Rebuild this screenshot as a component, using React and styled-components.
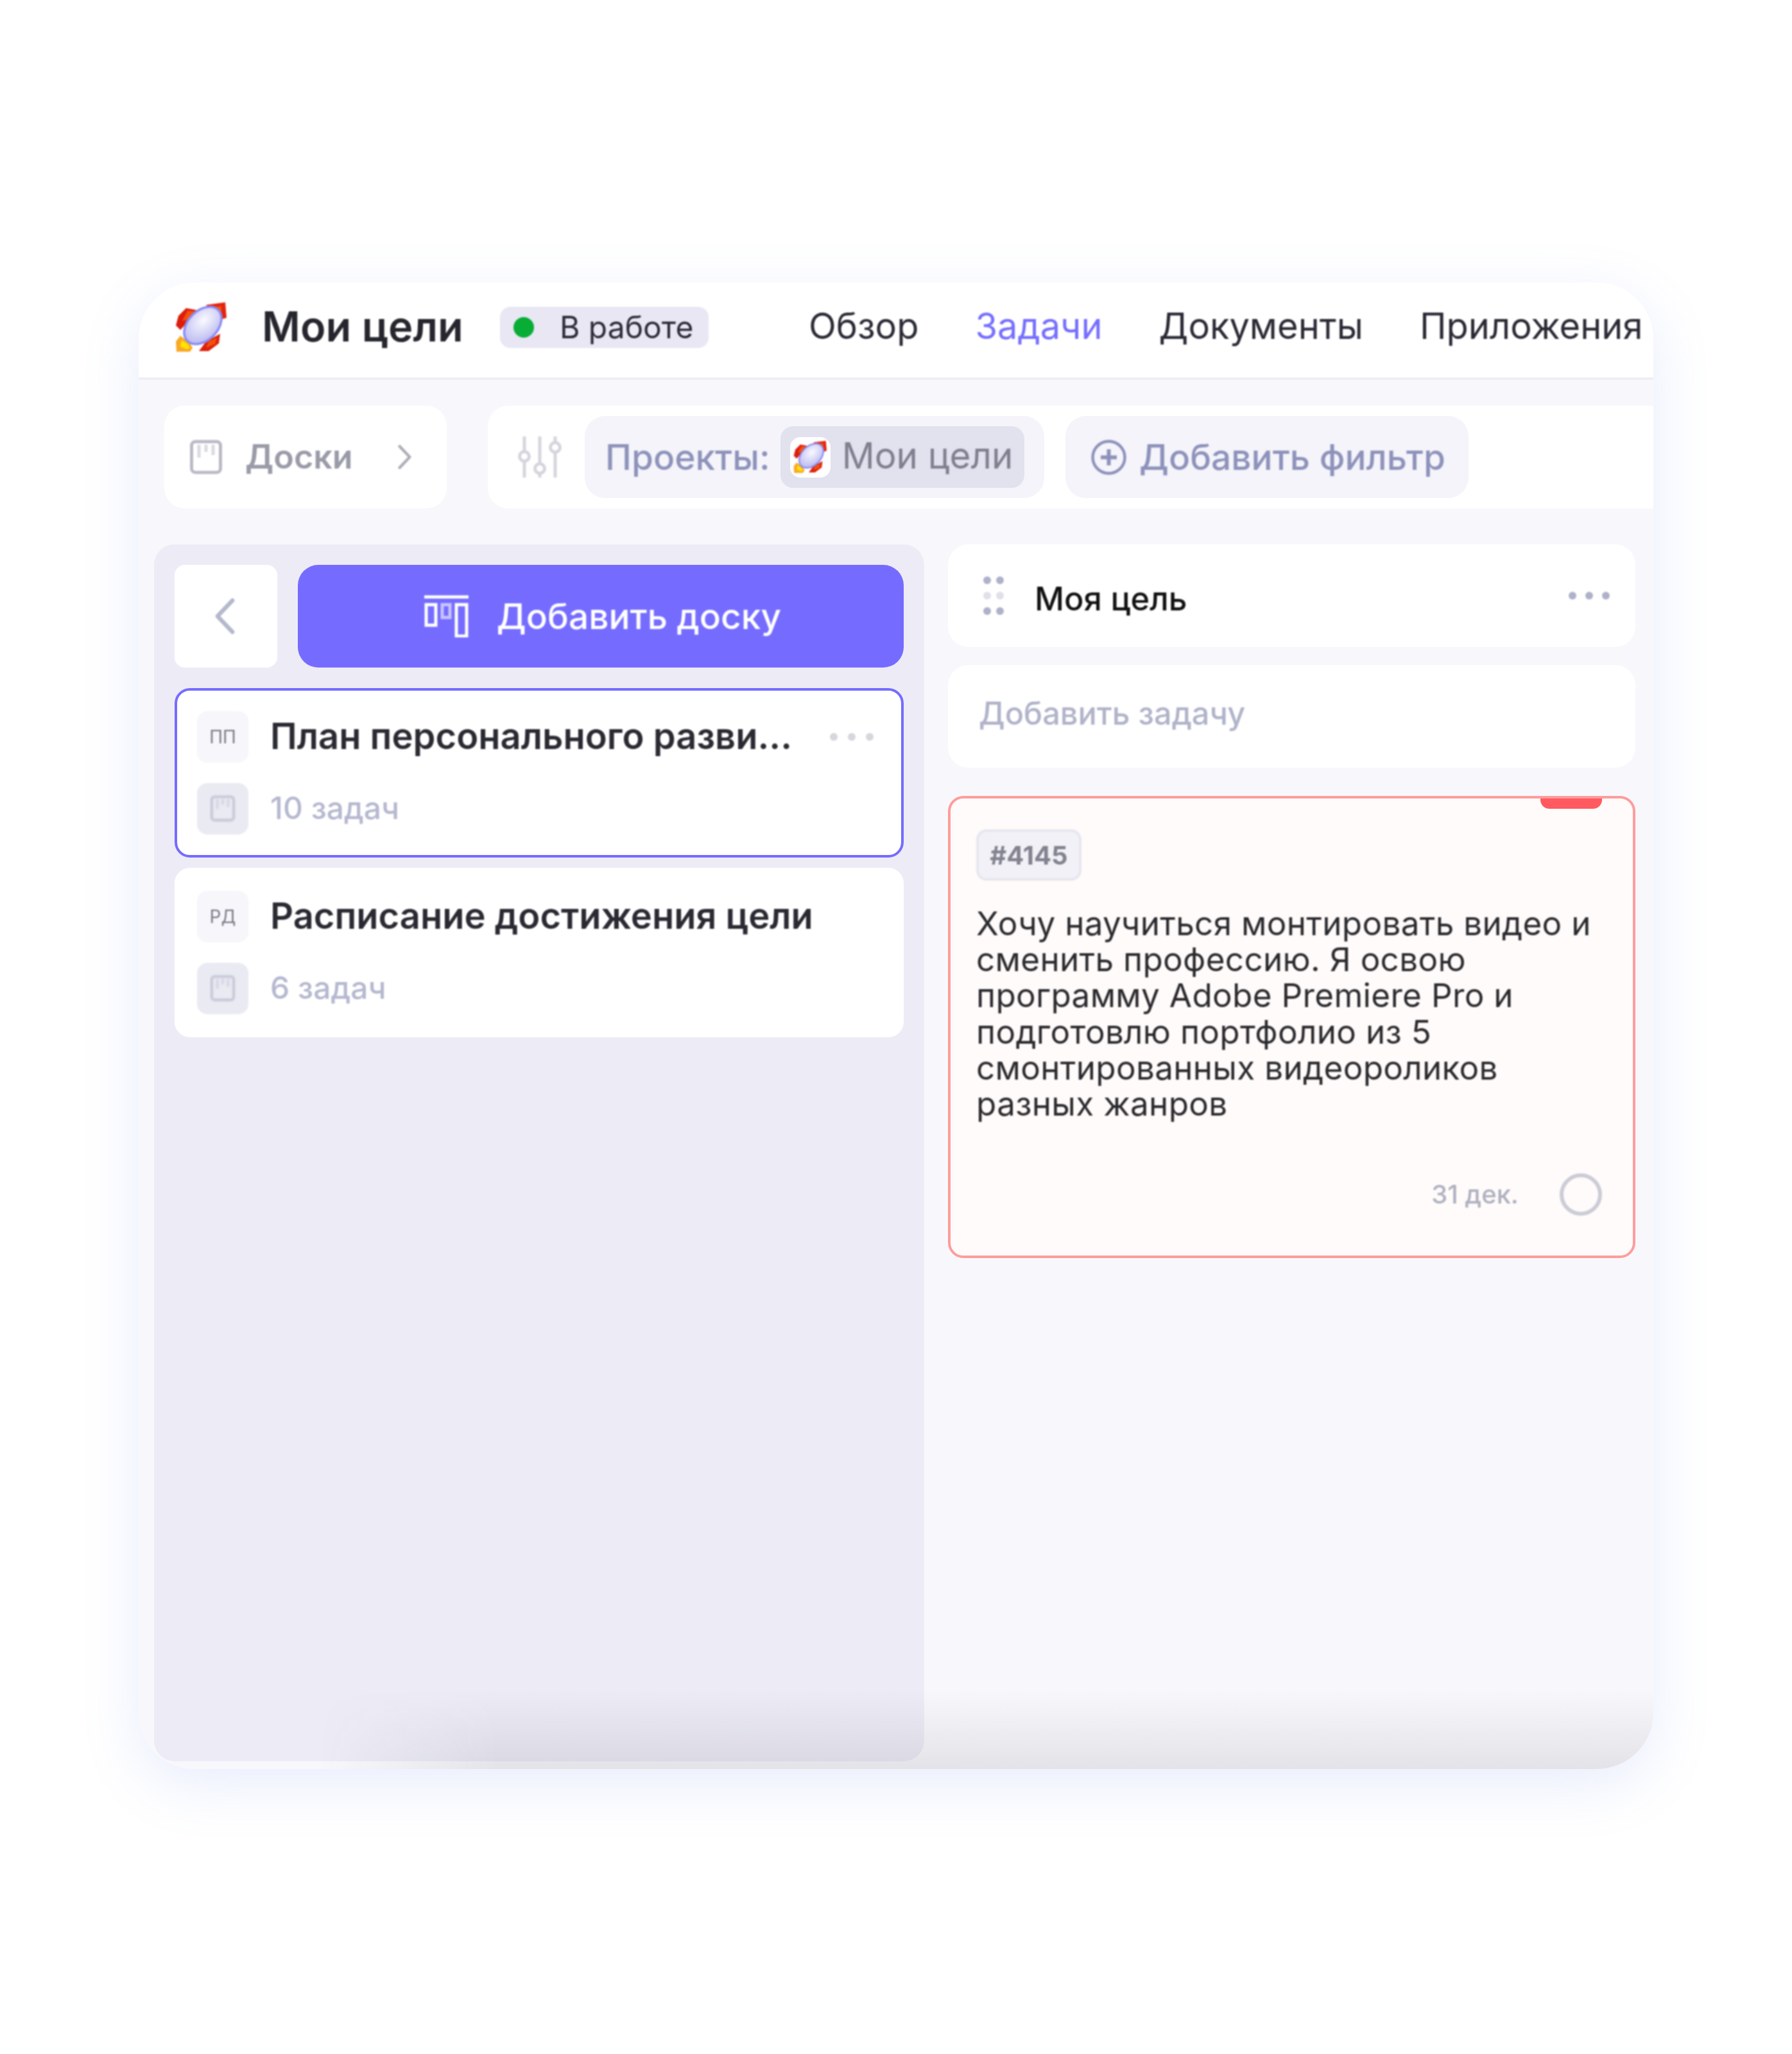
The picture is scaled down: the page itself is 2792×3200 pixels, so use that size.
import React from 'react';
import styled, { createGlobalStyle, css } from 'styled-components';

const Global = createGlobalStyle`
  html, body { margin: 0; background: #fff; }
  * { box-sizing: border-box; }
  body { font-family: Inter, "Noto Sans", sans-serif; }
`;
const soft = css`filter: blur(1.2px);`;

const Stage = styled.div`
  width: 2792px; height: 3200px; padding: 440px 216px 0 216px;
`;
const Win = styled.div`
  position: relative; width: 2360px; height: 2316px; background: #f8f8fc;
  border-radius: 88px; overflow: hidden; display: flex; flex-direction: column;
`;
const Wrap = styled.div`
  border-radius: 88px;
  box-shadow: 0 24px 90px rgba(110, 140, 235, 0.16);
`;
const Header = styled.header`
  height: 152px; flex: none; background: #fff; border-bottom: 4px solid #eeeef6;
  display: flex; align-items: center; padding: 0 0 8px 57px;
`;
const Title = styled.h1`
  margin: 0 0 4px 55px; font-size: 65px; font-weight: 600; color: #26262e; line-height: 1; white-space: nowrap; ${soft}
`;
const Badge = styled.div`
  margin-left: 57px; height: 64px; width: 325px; border-radius: 16px; background: #e8e7f3;
  display: flex; align-items: center; padding-left: 21px; gap: 43px; ${soft}
`;
const Dot = styled.span`width: 32px; height: 32px; border-radius: 50%; background: #08ad36;`;
const BadgeText = styled.span`font-size: 48px; color: #2c2c38; line-height: 1; white-space: nowrap; margin-left: -3px;`;
const Nav = styled.nav`margin: 0 0 4px 156px; display: flex; gap: 88px;`;
const NavItem = styled.a`
  font-size: 56px; line-height: 1; color: ${p => (p.$active ? '#756eff' : '#2a2a35')}; white-space: nowrap; ${soft}
`;
const FilterRow = styled.div`
  flex: none; margin-top: 40px; height: 160px; padding-left: 40px; display: flex; gap: 64px;
`;
const Boards = styled.div`
  width: 440px; background: #fff; border-radius: 32px; display: flex; align-items: center; padding-left: 40px;
`;
const BoardsText = styled.span`
  margin-left: 36px; width: 238px; font-size: 52px; font-weight: 600; color: #9a9ba8; line-height: 1; ${soft}
`;
const Filters = styled.div`
  flex: 1; background: #fff; border-radius: 32px 0 0 32px; display: flex; align-items: center; padding-left: 46px;
`;
const Pill = styled.div`
  margin-left: ${p => p.$ml}px; height: 128px; width: ${p => p.$w}px; border-radius: 32px; background: #f4f4fa;
  display: flex; align-items: center; padding-left: ${p => p.$pl}px;
`;
const FilterText = styled.span`
  margin-left: ${p => p.$ml || 0}px; font-size: 55px; font-weight: 500; color: #8e92bb; line-height: 1; white-space: nowrap; ${soft}
`;
const Chip = styled.div`
  margin-left: 16px; width: 380px; height: 96px; border-radius: 20px; background: #e2e1ee;
  display: flex; align-items: center; padding-left: 15px;
`;
const RocketTile = styled.div`
  width: 63px; height: 63px; border-radius: 16px; background: #fff; display: flex; align-items: center; justify-content: center;
`;
const ChipText = styled.span`
  margin: 0 0 4px 18px; font-size: 56.5px; color: #7f7f8f; line-height: 1; white-space: nowrap; ${soft}
`;
const Columns = styled.div`
  flex: none; margin-top: 56px; padding-left: 24px; display: flex; gap: 37px;
`;
const LeftPanel = styled.section`
  width: 1200px; height: 1896px; background: #edecf6; border-radius: 32px; padding: 32px;
  display: flex; flex-direction: column;
`;
const Actions = styled.div`display: flex; gap: 32px; margin-bottom: 32px;`;
const BackBtn = styled.button`
  width: 160px; height: 160px; border: 0; border-radius: 16px; background: #fff; padding: 0 3px 0 0;
  display: flex; align-items: center; justify-content: center;
`;
const AddBtn = styled.button`
  flex: 1; height: 160px; border: 0; border-radius: 32px; background: #756cff; padding: 0 0 0 6px;
  display: flex; align-items: center; justify-content: center; gap: 44px; font-family: inherit;
`;
const AddText = styled.span`font-size: 55px; font-weight: 500; color: #fff; line-height: 1; ${soft}`;
const Board = styled.article`
  height: 264px; margin-bottom: 16px; border-radius: 24px; background: #fff; padding: 32px 31px;
  border: 4px solid ${p => (p.$active ? '#756cff' : '#fff')};
  display: flex; flex-direction: column; gap: 32px;
`;
const BoardRow = styled.div`display: flex; align-items: center; gap: 34px;`;
const Square = styled.div`
  flex: none; width: 80px; height: 80px; border-radius: 16px; background: ${p => (p.$dark ? '#eaeaf3' : '#f6f6fb')};
  display: flex; align-items: center; justify-content: center; font-size: 28px; color: #7c7c88; ${soft}
`;
const BoardTitle = styled.div`
  flex: 1; min-width: 0; font-size: 56px; font-weight: 600; color: #2a2a32; line-height: 1.2; white-space: nowrap; ${soft}
`;
const BoardCount = styled.div`margin-top: -3px; font-size: 48px; font-weight: 500; color: #b5b8cf; line-height: 1; ${soft}`;
const Dots = styled.div`
  display: flex; gap: ${p => p.$gap}px; margin-right: ${p => p.$mr}px; flex: none; ${soft}
`;
const DotItem = styled.i`
  display: block; width: 12px; height: 12px; border-radius: 50%; background: ${p => p.$c};
`;
const RightCol = styled.section`width: 1071px; display: flex; flex-direction: column;`;
const GoalCard = styled.div`
  height: 160px; background: #fff; border-radius: 32px; display: flex; align-items: center; padding: 0 40px 0 55px; margin-bottom: 28px;
`;
const Grip = styled.div`
  display: grid; grid-template-columns: 12px 12px; gap: 12px 8px; margin: 0 50px 0 0; ${soft}
`;
const GoalText = styled.div`flex: 1; margin: 10px 0 0 -2px; font-size: 50.5px; font-weight: 500; color: #111; line-height: 1; ${soft}`;
const AddTask = styled.div`
  height: 160px; background: #fff; border-radius: 32px; display: flex; align-items: center; padding: 0 0 8px 48px; margin-bottom: 44px;
  font-size: 48.7px; font-weight: 500; color: #b0b3c9; line-height: 1;
`;
const AddTaskText = styled.span`${soft}`;
const Task = styled.article`
  position: relative; height: 720px; border-radius: 24px; background: #fffbfa; border: 4px solid #ff9c9c; padding: 48px 40px 0;
`;
const RedTab = styled.div`
  position: absolute; top: 0; right: 48px; width: 96px; height: 16px; background: #ff5a5f; border-radius: 0 0 14px 14px;
`;
const Tag = styled.div`
  display: inline-flex; align-items: center; justify-content: center; width: 164px; height: 80px;
  border-radius: 16px; background: #f1f1f7; border: 4px solid #e6e7ef;
  font-size: 40px; font-weight: 700; color: #82838f; ${soft}
`;
const TaskText = styled.p`
  margin: 38px 0 0; font-size: 51.2px; line-height: 56.2px; color: #2a2a2e; letter-spacing: 0.3px; ${soft}
`;
const TaskFoot = styled.div`
  position: absolute; right: 48px; bottom: 62px; display: flex; align-items: center; gap: 64px;
`;
const DateText = styled.span`font-size: 40px; font-weight: 500; color: #aeb0c0; line-height: 1; ${soft}`;
const Circle = styled.span`
  width: 66px; height: 66px; border-radius: 50%; border: 6px solid #ccccd6; ${soft}
`;
const BottomShade = styled.div`
  position: absolute; left: 0; right: 0; bottom: 0; height: 124px; pointer-events: none;
  background: linear-gradient(to bottom, rgba(45,45,60,0), rgba(45,45,60,0.1));
  -webkit-mask-image: linear-gradient(to right, transparent 280px, #000 560px);
  mask-image: linear-gradient(to right, transparent 280px, #000 560px);
`;
const Svg = styled.svg`display: block; flex: none; ${soft}`;

const Rocket = ({ size }) => (
  <Svg width={size} height={size} viewBox="0 0 80 80">
    <defs>
      <radialGradient id={`b${size}`} cx="0.6" cy="0.4" r="0.65">
        <stop offset="0" stopColor="#fafaff" />
        <stop offset="1" stopColor="#b9b8f0" />
      </radialGradient>
    </defs>
    <polygon points="48,5 78,1 80,25 68,29 57,15" fill="#e2240e" />
    <polygon points="60,8 72,7 72,22 66,20" fill="#f4520e" />
    <polygon points="17,10 33,13 19,32 8,44 1,37 5,22" fill="#dc1c0c" />
    <polygon points="19,14 31,15 19,28 11,30" fill="#f4500c" />
    <polygon points="70,50 68,65 52,77 37,77 48,62" fill="#dc200c" />
    <polygon points="65,56 62,66 48,72 52,62" fill="#f4500c" />
    <polygon points="8,53 23,65 27,72 23,78 2,78 1,62" fill="#f9a825" />
    <polygon points="10,60 19,66 23,72 18,74 8,70" fill="#ffe600" />
    <ellipse cx="43" cy="37" rx="34" ry="23" transform="rotate(-45 43 37)" fill={`url(#b${size})`} stroke="#8a8cf6" strokeWidth="3.5" />
  </Svg>
);

const BoardIcon = ({ s = 50, c = '#b9bac6' }) => (
  <Svg width={s} height={s * 1.08} viewBox="0 0 50 54" fill="none">
    <rect x="2.5" y="3" width="45" height="48" rx="6" stroke={c} strokeWidth="5" />
    <path d="M14 8v20M25 8v11M36 8v16" stroke={c} strokeWidth="5" opacity="0.55" />
  </Svg>
);

const Chevron = ({ d, w, h, c }) => (
  <Svg width={w} height={h} viewBox="0 0 24 44" fill="none">
    <path d={d} stroke={c} strokeWidth="5" strokeLinecap="round" strokeLinejoin="round" />
  </Svg>
);

const SliderIcon = () => (
  <Svg width="70" height="64" viewBox="0 0 70 64" fill="none" stroke="#d5d5de" strokeWidth="5">
    <path d="M11 0v24M11 38v26M35 0v42M35 58v6M59 0v9M59 24v40" />
    <circle cx="11" cy="31" r="7.5" />
    <circle cx="35" cy="50" r="7.5" />
    <circle cx="59" cy="17" r="7.5" />
  </Svg>
);

const PlusCircle = () => (
  <Svg width="55" height="55" viewBox="0 0 55 55" fill="none" stroke="#8e92bb" strokeWidth="4.5">
    <circle cx="27.5" cy="27.5" r="25" />
    <path d="M27.5 15v25M15 27.5h25" strokeWidth="6" />
  </Svg>
);

const ColumnsIcon = () => (
  <Svg width="69" height="66" viewBox="0 0 69 66" fill="none" stroke="#fff" strokeWidth="5">
    <path d="M0 3h69" />
    <rect x="3" y="15" width="15" height="32" />
    <rect x="28" y="15" width="12" height="20" opacity="0.6" />
    <rect x="50" y="15" width="16" height="49" />
  </Svg>
);

const ThreeDots = ({ c, mr = 0, gap = 14 }) => (
  <Dots $mr={mr} $gap={gap}>
    {[0, 1, 2].map(i => <DotItem key={i} $c={c} />)}
  </Dots>
);

const BoardCard = ({ active, code, title, count }) => (
  <Board $active={active}>
    <BoardRow>
      <Square>{code}</Square>
      <BoardTitle>{title}</BoardTitle>
      {active && <ThreeDots c="#d6d6dd" mr={12} gap={16} />}
    </BoardRow>
    <BoardRow>
      <Square $dark><BoardIcon s={38} c="#c3c5d4" /></Square>
      <BoardCount>{count}</BoardCount>
    </BoardRow>
  </Board>
);

export default function App() {
  const grip = ['#aeb1c9', '#aeb1c9', '#dfe0ea', '#dfe0ea', '#aeb1c9', '#aeb1c9'];
  return (
    <Stage>
      <Global />
      <Wrap>
        <Win>
          <Header>
            <Rocket size={80} />
            <Title>Мои цели</Title>
            <Badge><Dot /><BadgeText>В работе</BadgeText></Badge>
            <Nav>
              <NavItem>Обзор</NavItem>
              <NavItem $active>Задачи</NavItem>
              <NavItem>Документы</NavItem>
              <NavItem>Приложения</NavItem>
            </Nav>
          </Header>
          <FilterRow>
            <Boards>
              <BoardIcon />
              <BoardsText>Доски</BoardsText>
              <Chevron d="M3 3 L21 22 L3 41" w={21} h={40} c="#aeaeb9" />
            </Boards>
            <Filters>
              <SliderIcon />
              <Pill $ml={35} $w={716} $pl={32}>
                <FilterText>Проекты:</FilterText>
                <Chip>
                  <RocketTile><Rocket size={52} /></RocketTile>
                  <ChipText>Мои цели</ChipText>
                </Chip>
              </Pill>
              <Pill $ml={33} $w={628} $pl={40}>
                <PlusCircle />
                <FilterText $ml={20}>Добавить фильтр</FilterText>
              </Pill>
            </Filters>
          </FilterRow>
          <Columns>
            <LeftPanel>
              <Actions>
                <BackBtn><Chevron d="M21 3 L3 22 L21 41" w={31} h={58} c="#b4b8cc" /></BackBtn>
                <AddBtn><ColumnsIcon /><AddText>Добавить доску</AddText></AddBtn>
              </Actions>
              <BoardCard active code="ПП" title="План персонального разви..." count="10 задач" />
              <BoardCard code="РД" title="Расписание достижения цели" count="6 задач" />
            </LeftPanel>
            <RightCol>
              <GoalCard>
                <Grip>{grip.map((c, i) => <DotItem key={i} $c={c} />)}</Grip>
                <GoalText>Моя цель</GoalText>
                <ThreeDots c="#aeb1c9" gap={14} />
              </GoalCard>
              <AddTask><AddTaskText>Добавить задачу</AddTaskText></AddTask>
              <Task>
                <RedTab />
                <Tag>#4145</Tag>
                <TaskText>
                  Хочу научиться монтировать видео и сменить профессию. Я освою программу Adobe Premiere Pro и подготовлю портфолио из 5 смонтированных видеороликов разных жанров
                </TaskText>
                <TaskFoot>
                  <DateText>31 дек.</DateText>
                  <Circle />
                </TaskFoot>
              </Task>
            </RightCol>
          </Columns>
          <BottomShade />
        </Win>
      </Wrap>
    </Stage>
  );
}
